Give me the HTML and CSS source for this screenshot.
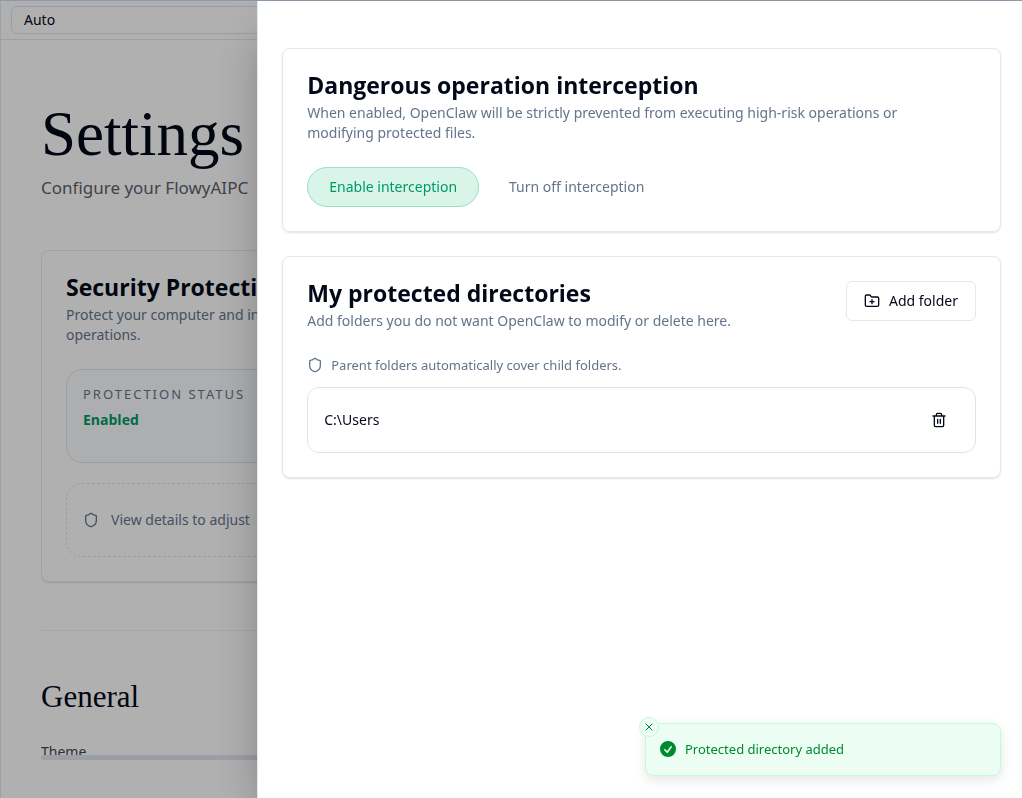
FILE: index.html
```html
<!DOCTYPE html>
<html lang="en">
<head>
    <meta charset="UTF-8">
    <meta name="viewport" content="width=device-width, initial-scale=1.0">
    <title>Settings</title>
    <link rel="stylesheet" href="styles.css">
</head>
<body>
    <div class="app">
        <header class="topbar">
            <button class="mode-btn">Auto</button>
        </header>

        <main class="page">
            <div class="scroll-area">
                <h1>Settings</h1>
                <p class="subtitle">Configure your FlowyAIPC</p>

                <section class="card">
                    <h2>Security Protection</h2>
                    <p class="desc narrow">Protect your computer and intercept operations.</p>
                    <div class="status">
                        <p class="status-label">Protection status</p>
                        <p class="status-value">Enabled</p>
                    </div>
                    <div class="hint">
                        <svg class="icon" viewBox="0 0 24 24"><path d="M20 13c0 5-3.5 7.5-7.66 8.95a1 1 0 0 1-.67-.01C7.5 20.5 4 18 4 13V6a1 1 0 0 1 1-1c2 0 4.500-1.200 6.240-2.720a1.170 1.170 0 0 1 1.520 0C14.510 3.810 17 5 19 5a1 1 0 0 1 1 1z"/></svg>
                        <span>View details to adjust</span>
                    </div>
                </section>

                <hr>

                <h3>General</h3>
                <p class="field-label">Theme</p>
            </div>
            <div class="scrollbar"></div>
        </main>
    </div>

    <div class="overlay">
        <aside class="sheet" role="dialog" aria-label="Security details">
            <section class="card">
                <h2>Dangerous operation interception</h2>
                <p class="desc">When enabled, OpenClaw will be strictly prevented from executing high-risk operations or modifying protected files.</p>
                <div class="choices">
                    <button class="pill active">Enable interception</button>
                    <button class="pill">Turn off interception</button>
                </div>
            </section>

            <section class="card">
                <div class="card-head">
                    <div>
                        <h2>My protected directories</h2>
                        <p class="desc">Add folders you do not want OpenClaw to modify or delete here.</p>
                    </div>
                    <button class="add-btn">
                        <svg class="icon" viewBox="0 0 24 24"><path d="M12 10v6M9 13h6"/><path d="M20 20a2 2 0 0 0 2-2V8a2 2 0 0 0-2-2h-7.900a2 2 0 0 1-1.690-.9L9.600 3.900A2 2 0 0 0 7.930 3H4a2 2 0 0 0-2 2v13a2 2 0 0 0 2 2Z"/></svg>
                        Add folder
                    </button>
                </div>
                <p class="note">
                    <svg class="icon" viewBox="0 0 24 24"><path d="M20 13c0 5-3.5 7.5-7.66 8.95a1 1 0 0 1-.67-.01C7.5 20.5 4 18 4 13V6a1 1 0 0 1 1-1c2 0 4.500-1.200 6.240-2.720a1.170 1.170 0 0 1 1.520 0C14.510 3.810 17 5 19 5a1 1 0 0 1 1 1z"/></svg>
                    Parent folders automatically cover child folders.
                </p>
                <ul class="folders">
                    <li>
                        <span>C:\Users</span>
                        <button class="delete-btn" aria-label="Delete">
                            <svg class="icon" viewBox="0 0 24 24"><path d="M3 6h18M19 6v14c0 1-1 2-2 2H7c-1 0-2-1-2-2V6M8 6V4c0-1 1-2 2-2h4c1 0 2 1 2 2v2M10 11v6M14 11v6"/></svg>
                        </button>
                    </li>
                </ul>
            </section>
        </aside>
    </div>

    <div class="toast" role="status">
        <button class="toast-close" aria-label="Close">
            <svg class="icon" viewBox="0 0 24 24"><path d="M18 6 6 18M6 6l12 12"/></svg>
        </button>
        <svg class="check" viewBox="0 0 20 20"><path fill-rule="evenodd" d="M10 18a8 8 0 1 0 0-16 8 8 0 0 0 0 16zm3.857-9.809a.75.75 0 0 0-1.214-.882l-3.483 4.790-1.880-1.880a.75.75 0 1 0-1.060 1.061l2.500 2.500a.75.75 0 0 0 1.137-.089l4-5.500z"/></svg>
        <span>Protected directory added</span>
    </div>
</body>
</html>
```
FILE: styles.css
```css
* {
    margin: 0;
    padding: 0;
    box-sizing: border-box;
}

body {
    font-family: "Noto Sans", "Open Sans", sans-serif;
    font-size: 14px;
    line-height: 20px;
    color: #020817;
    background: #fff;
    overflow: hidden;
}

button {
    font: inherit;
    color: inherit;
    background: none;
    border: none;
    cursor: pointer;
}

.icon {
    width: 16px;
    height: 16px;
    flex: none;
    fill: none;
    stroke: currentColor;
    stroke-width: 2;
    stroke-linecap: round;
    stroke-linejoin: round;
}

/* page */

.app {
    display: flex;
    flex-direction: column;
    height: 100vh;
    padding-left: 1px;
    background: #fdfdfd;
}

.topbar {
    padding: 6px 10px 5px;
    border-bottom: 1px solid #e2e4e8;
}

.mode-btn {
    display: block;
    width: 100%;
    height: 28px;
    padding: 0 12px;
    text-align: left;
    border: 1px solid #dde2ea;
    border-radius: 6px;
}

.page {
    flex: 1;
    min-height: 0;
    display: flex;
    flex-direction: column;
    padding: 58px 40px 38px;
}

.scroll-area {
    flex: 1;
    min-height: 0;
    overflow: hidden;
}

.scrollbar {
    flex: none;
    height: 5px;
    border-radius: 3px;
    background: #dfe4ec;
}

h1 {
    font-family: "Liberation Serif", serif;
    font-size: 63px;
    line-height: 72px;
    font-weight: 400;
}

.subtitle {
    margin: 4px 0 48px;
    font-size: 17px;
    line-height: 28px;
    color: #5b606b;
}

.card {
    padding: 24px;
    border: 1px solid #e2e8f0;
    border-radius: 8px;
    box-shadow: 0 1px 2px rgba(0, 0, 0, 0.12);
}

h2 {
    font-family: "Open Sans", "Noto Sans", sans-serif;
    font-size: 23px;
    line-height: 24px;
    font-weight: 700;
}

.desc {
    margin-top: 6px;
    color: #64748b;
}

.sheet .desc {
    max-width: 640px;
}

.narrow {
    max-width: 260px;
}

.status {
    height: 94px;
    margin-top: 24px;
    padding: 16px;
    border: 1px solid #dfe1e4;
    border-radius: 16px;
    background: #f8fafc;
}

.status-label {
    font-size: 13px;
    line-height: 16px;
    letter-spacing: 2px;
    text-transform: uppercase;
    color: #64748b;
}

.status-value {
    margin-top: 8px;
    font-family: "Open Sans", "Noto Sans", sans-serif;
    font-weight: 700;
    color: #009966;
}

.hint {
    display: flex;
    align-items: center;
    gap: 12px;
    height: 74px;
    margin-top: 20px;
    padding: 0 16px;
    border: 1px dashed #dfe1e4;
    border-radius: 16px;
    color: #64748b;
}

hr {
    margin: 48px 0;
    border: none;
    border-top: 1px solid #eceef1;
}

h3 {
    font-family: "Liberation Serif", serif;
    font-size: 31px;
    line-height: 36px;
    font-weight: 400;
}

.field-label {
    margin-top: 27px;
    color: #3f4552;
}

/* details sheet */

.overlay {
    position: fixed;
    inset: 0;
    display: flex;
    justify-content: flex-end;
    border-top: 1px solid #8b9aa8;
    border-left: 1px solid #9ca0ae;
    background: rgba(0, 0, 0, 0.3);
}

.sheet {
    display: flex;
    flex-direction: column;
    gap: 24px;
    width: calc(75% - 1px);
    padding: 47px 21px 24px 24px;
    background: #fff;
    border-left: 1px solid #e2e8f0;
    box-shadow: 0 25px 50px -12px rgba(0, 0, 0, 0.4);
}

.choices {
    display: flex;
    gap: 8px;
    margin-top: 24px;
}

.pill {
    height: 40px;
    padding: 0 21px;
    border: 1px solid transparent;
    border-radius: 20px;
    color: #64748b;
}

.pill.active {
    color: #009966;
    background: #d9f5ea;
    border-color: #94e3c5;
}

.card-head {
    display: flex;
    justify-content: space-between;
    align-items: flex-start;
}

.add-btn {
    display: flex;
    align-items: center;
    gap: 9px;
    height: 40px;
    padding: 0 17px;
    border: 1px solid #e2e8f0;
    border-radius: 6px;
}

.note {
    display: flex;
    align-items: center;
    gap: 8px;
    margin-top: 24px;
    font-size: 13px;
    color: #64748b;
}

.folders {
    margin-top: 12px;
    list-style: none;
}

.folders li {
    display: flex;
    justify-content: space-between;
    align-items: center;
    height: 66px;
    padding: 0 16px;
    border: 1px solid #e2e4e8;
    border-radius: 12px;
}

.delete-btn {
    display: flex;
    align-items: center;
    justify-content: center;
    width: 40px;
    height: 36px;
}

/* toast */

.toast {
    position: fixed;
    right: 21px;
    bottom: 22px;
    display: flex;
    align-items: center;
    gap: 7px;
    width: 356px;
    height: 53px;
    padding: 0 12px 1px;
    font-size: 13px;
    color: #008a2e;
    background: #ecfdf3;
    border: 1px solid #bffcd9;
    border-radius: 8px;
    box-shadow: 0 4px 12px rgba(0, 0, 0, 0.1);
}

.check {
    width: 20px;
    height: 20px;
    fill: currentColor;
}

.toast-close {
    position: absolute;
    top: -7px;
    left: -7px;
    display: flex;
    align-items: center;
    justify-content: center;
    width: 20px;
    height: 20px;
    background: #ecfdf3;
    border: 1px solid #bffcd9;
    border-radius: 50%;
}

.toast-close .icon {
    width: 12px;
    height: 12px;
}
```
